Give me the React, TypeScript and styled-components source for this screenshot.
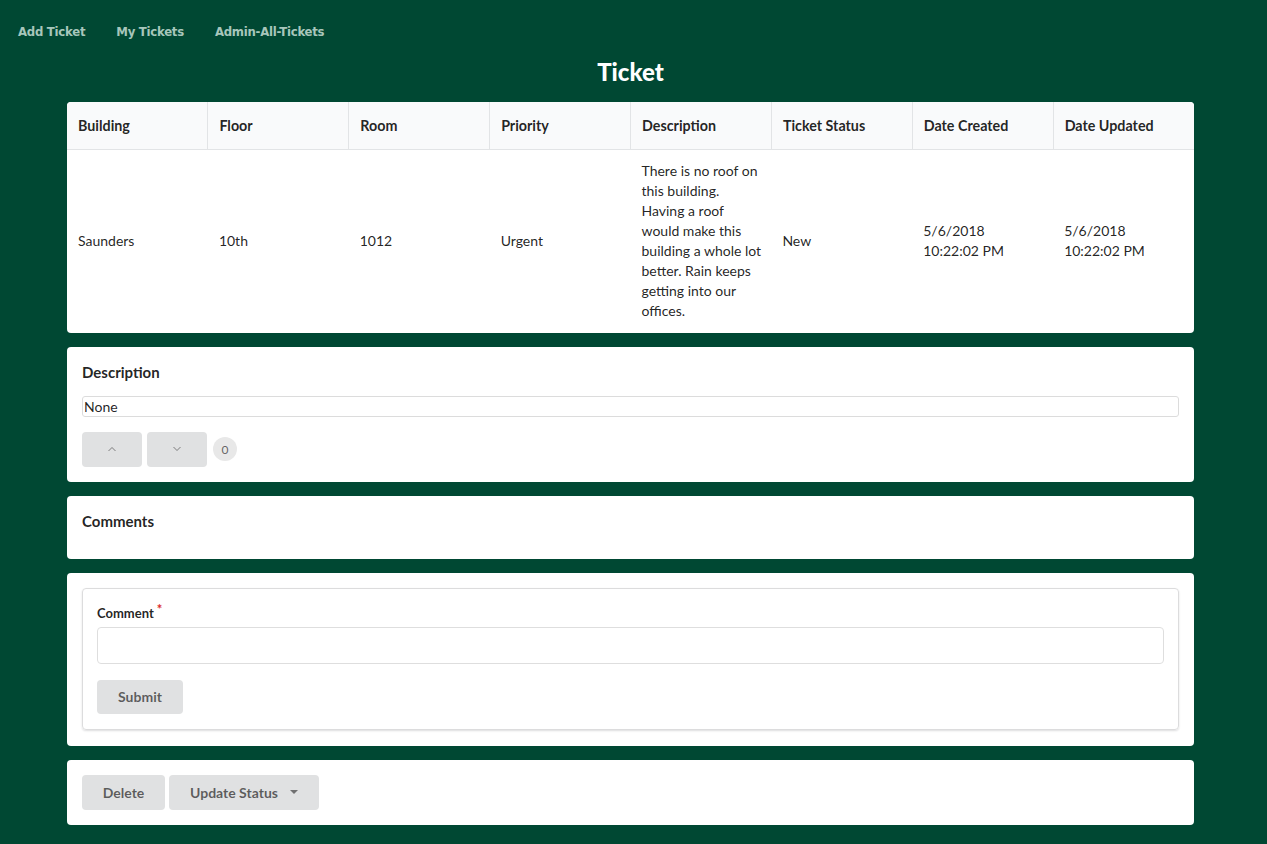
import React from "react";
import styled, { createGlobalStyle } from "styled-components";

const Global = createGlobalStyle`
  html, body { margin: 0; padding: 0; background: #004833; }
  body { font-family: Lato, "Open Sans", "Liberation Sans", sans-serif; color: rgba(0,0,0,0.87); font-size: 14px; }
  * { box-sizing: border-box; }
`;

const Page = styled.div`
  min-height: 844px;
  background: #004833;
  padding-bottom: 20px;
`;

const Nav = styled.nav`
  display: flex;
  gap: 31px;
  padding: 22px 0 0 18px;
  height: 52px;
`;

const NavLink = styled.a`
  font-family: "DejaVu Sans Condensed", "DejaVu Sans", sans-serif;
  font-weight: bold;
  font-size: 13px;
  letter-spacing: -0.25px;
  color: #a7c6bb;
  text-decoration: none;
  line-height: 20px;
`;

const Main = styled.main`
  margin-left: 67px;
  width: 1127px;
`;

const Title = styled.h1`
  margin: 2px 0 12px;
  text-align: center;
  color: #fff;
  font-family: Lato, sans-serif;
  font-weight: 900;
  font-size: 24px;
  line-height: 36px;
`;

const Stack = styled.div`
  display: flex;
  flex-direction: column;
  gap: 14px;
`;

const Card = styled.div<{ $pad?: string }>`
  background: #fff;
  border-radius: 4px;
  padding: ${(p) => p.$pad ?? "14px 15px"};
  overflow: hidden;
`;

const Table = styled.table`
  width: 100%;
  border-collapse: collapse;
  table-layout: fixed;
`;

const Th = styled.th`
  background: #f9fafb;
  text-align: left;
  font-weight: 700;
  font-size: 14.3px;
  padding: 0 11px;
  height: 47px;
  border-bottom: 1px solid #e2e4e6;
  border-left: 1px solid #e2e4e6;
  &:first-child { border-left: none; }
`;

const Td = styled.td`
  padding: 11.5px 7px 11.5px 11px;
  font-size: 14px;
  line-height: 20px;
  vertical-align: middle;
`;

const SectionTitle = styled.div`
  font-weight: 700;
  font-size: 15px;
  line-height: 20px;
  margin-top: 1px;
`;

const ValueBox = styled.div`
  margin-top: 14px;
  border: 1px solid #dcdcdc;
  border-radius: 3px;
  height: 21px;
  font-size: 14px;
  line-height: 19px;
  padding-left: 1px;
  width: 1097px;
`;

const Row = styled.div`
  display: flex;
  align-items: center;
  gap: 5px;
  margin-top: 15px;
`;

const Button = styled.button<{ $w?: number; $h?: number; $mt?: number }>`
  width: ${(p) => (p.$w ? `${p.$w}px` : "auto")};
  height: ${(p) => p.$h ?? 35}px;
  margin-top: ${(p) => p.$mt ?? 0}px;
  background: #e0e1e2;
  border: none;
  border-radius: 4px;
  color: rgba(0,0,0,0.6);
  font-family: Lato, sans-serif;
  font-weight: 700;
  font-size: 14px;
  display: flex;
  align-items: center;
  justify-content: center;
  padding: 0;
`;

const Badge = styled.span`
  width: 24px;
  height: 24px;
  border-radius: 50%;
  background: #e8e8e8;
  font-size: 12px;
  color: rgba(0,0,0,0.6);
  display: flex;
  align-items: center;
  justify-content: center;
  margin-left: 1px;
`;

const Segment = styled.div`
  border: 1px solid #dcdcdd;
  border-radius: 4px;
  box-shadow: 0 1px 2px rgba(34,36,38,0.15);
  padding: 14px 14px 15px 14px;
`;

const Label = styled.label`
  display: block;
  font-weight: 700;
  font-size: 13px;
  line-height: 16px;
  margin-top: 2px;
  &::after {
    content: "*";
    color: #db2828;
    margin-left: 3px;
    position: relative;
    top: -4px;
  }
`;

const Input = styled.input`
  display: block;
  width: 100%;
  height: 37px;
  margin-top: 6px;
  border: 1px solid #dedede;
  border-radius: 4px;
`;

const Actions = styled.div`
  display: flex;
  gap: 4px;
`;

const Caret = styled.span`
  display: inline-block;
  width: 0;
  height: 0;
  border-left: 4px solid transparent;
  border-right: 4px solid transparent;
  border-top: 4px solid rgba(0,0,0,0.5);
  margin-left: 12px;
`;

const Chevron = ({ up }: { up?: boolean }) => (
  <svg width="10" height="6" viewBox="0 0 10 6">
    <path
      d={up ? "M1.5 5 L5 1.5 L8.5 5" : "M1.5 1 L5 4.5 L8.5 1"}
      fill="none"
      stroke="rgba(0,0,0,0.45)"
      strokeWidth="1"
    />
  </svg>
);

const headers = ["Building", "Floor", "Room", "Priority", "Description", "Ticket Status", "Date Created", "Date Updated"];

export default function App() {
  return (
    <Page>
      <Global />
      <Nav>
        <NavLink>Add Ticket</NavLink>
        <NavLink>My Tickets</NavLink>
        <NavLink>Admin-All-Tickets</NavLink>
      </Nav>
      <Main>
        <Title>Ticket</Title>
        <Stack>
          <Card $pad="0">
            <Table>
              <thead>
                <tr>
                  {headers.map((h) => (
                    <Th key={h}>{h}</Th>
                  ))}
                </tr>
              </thead>
              <tbody>
                <tr>
                  <Td>Saunders</Td>
                  <Td>10th</Td>
                  <Td>1012</Td>
                  <Td>Urgent</Td>
                  <Td>
                    There is no roof on this building. Having a roof would make this building a whole lot better. Rain keeps getting into our offices.
                  </Td>
                  <Td>New</Td>
                  <Td>5/6/2018<br />10:22:02 PM</Td>
                  <Td>5/6/2018<br />10:22:02 PM</Td>
                </tr>
              </tbody>
            </Table>
          </Card>
          <Card $pad="14px 15px 15px">
            <SectionTitle>Description</SectionTitle>
            <ValueBox>None</ValueBox>
            <Row>
              <Button $w={60}><Chevron up /></Button>
              <Button $w={60}><Chevron /></Button>
              <Badge>0</Badge>
            </Row>
          </Card>
          <Card $pad="14px 15px 28px">
            <SectionTitle>Comments</SectionTitle>
          </Card>
          <Card $pad="15px 15px 16px">
            <Segment>
              <Label>Comment</Label>
              <Input />
              <Button $w={86} $h={34} $mt={16}>Submit</Button>
            </Segment>
          </Card>
          <Card $pad="15px 15px 15px">
            <Actions>
              <Button $w={83}>Delete</Button>
              <Button $w={150}>Update Status<Caret /></Button>
            </Actions>
          </Card>
        </Stack>
      </Main>
    </Page>
  );
}
